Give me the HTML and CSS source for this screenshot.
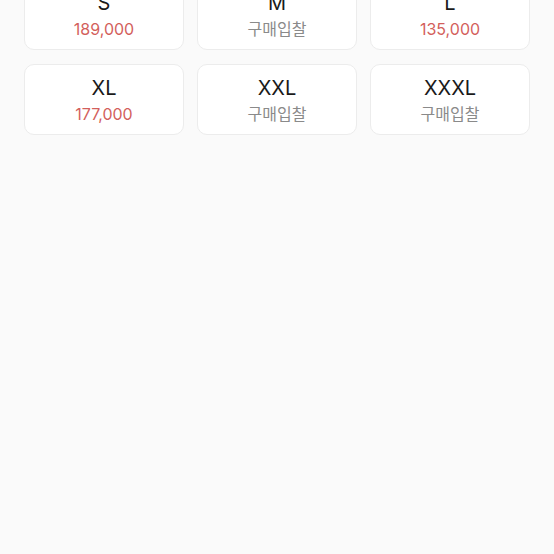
FILE: index.html
```html
<!DOCTYPE html>
<html lang="ko">
<head>
<meta charset="utf-8">
<link rel="stylesheet" href="styles.css">
</head>
<body>
<div class="page">
  <div class="grid">
    <div class="card"><div class="size">S</div><div class="price">189,000</div></div>
    <div class="card"><div class="size">M</div><div class="bid">구매입찰</div></div>
    <div class="card"><div class="size">L</div><div class="price">135,000</div></div>
    <div class="card"><div class="size">XL</div><div class="price">177,000</div></div>
    <div class="card"><div class="size">XXL</div><div class="bid">구매입찰</div></div>
    <div class="card"><div class="size">XXXL</div><div class="bid">구매입찰</div></div>
  </div>
</div>
</body>
</html>
```
FILE: styles.css
```css
html, body {
  margin: 0;
  padding: 0;
  background: #fafafa;
  height: 100%;
  overflow: hidden;
}
body {
  font-family: Inter, "Noto Sans CJK KR", sans-serif;
}
.page {
  padding: 0 24px;
  margin-top: -21px;
}
.grid {
  display: grid;
  grid-template-columns: repeat(3, 1fr);
  column-gap: 13px;
  row-gap: 14px;
}
.card {
  box-sizing: border-box;
  height: 71px;
  background: #fff;
  border: 1px solid #ececec;
  border-radius: 10px;
  padding: 11px 0 8px;
  display: flex;
  flex-direction: column;
  align-items: center;
}
.size {
  font-size: 20px;
  line-height: 25px;
  color: #1a1a1a;
}
.price {
  font-size: 16px;
  line-height: 26px;
  color: #d35f5c;
}
.bid {
  font-size: 16px;
  line-height: 26px;
  color: #8a8a8a;
}
```
